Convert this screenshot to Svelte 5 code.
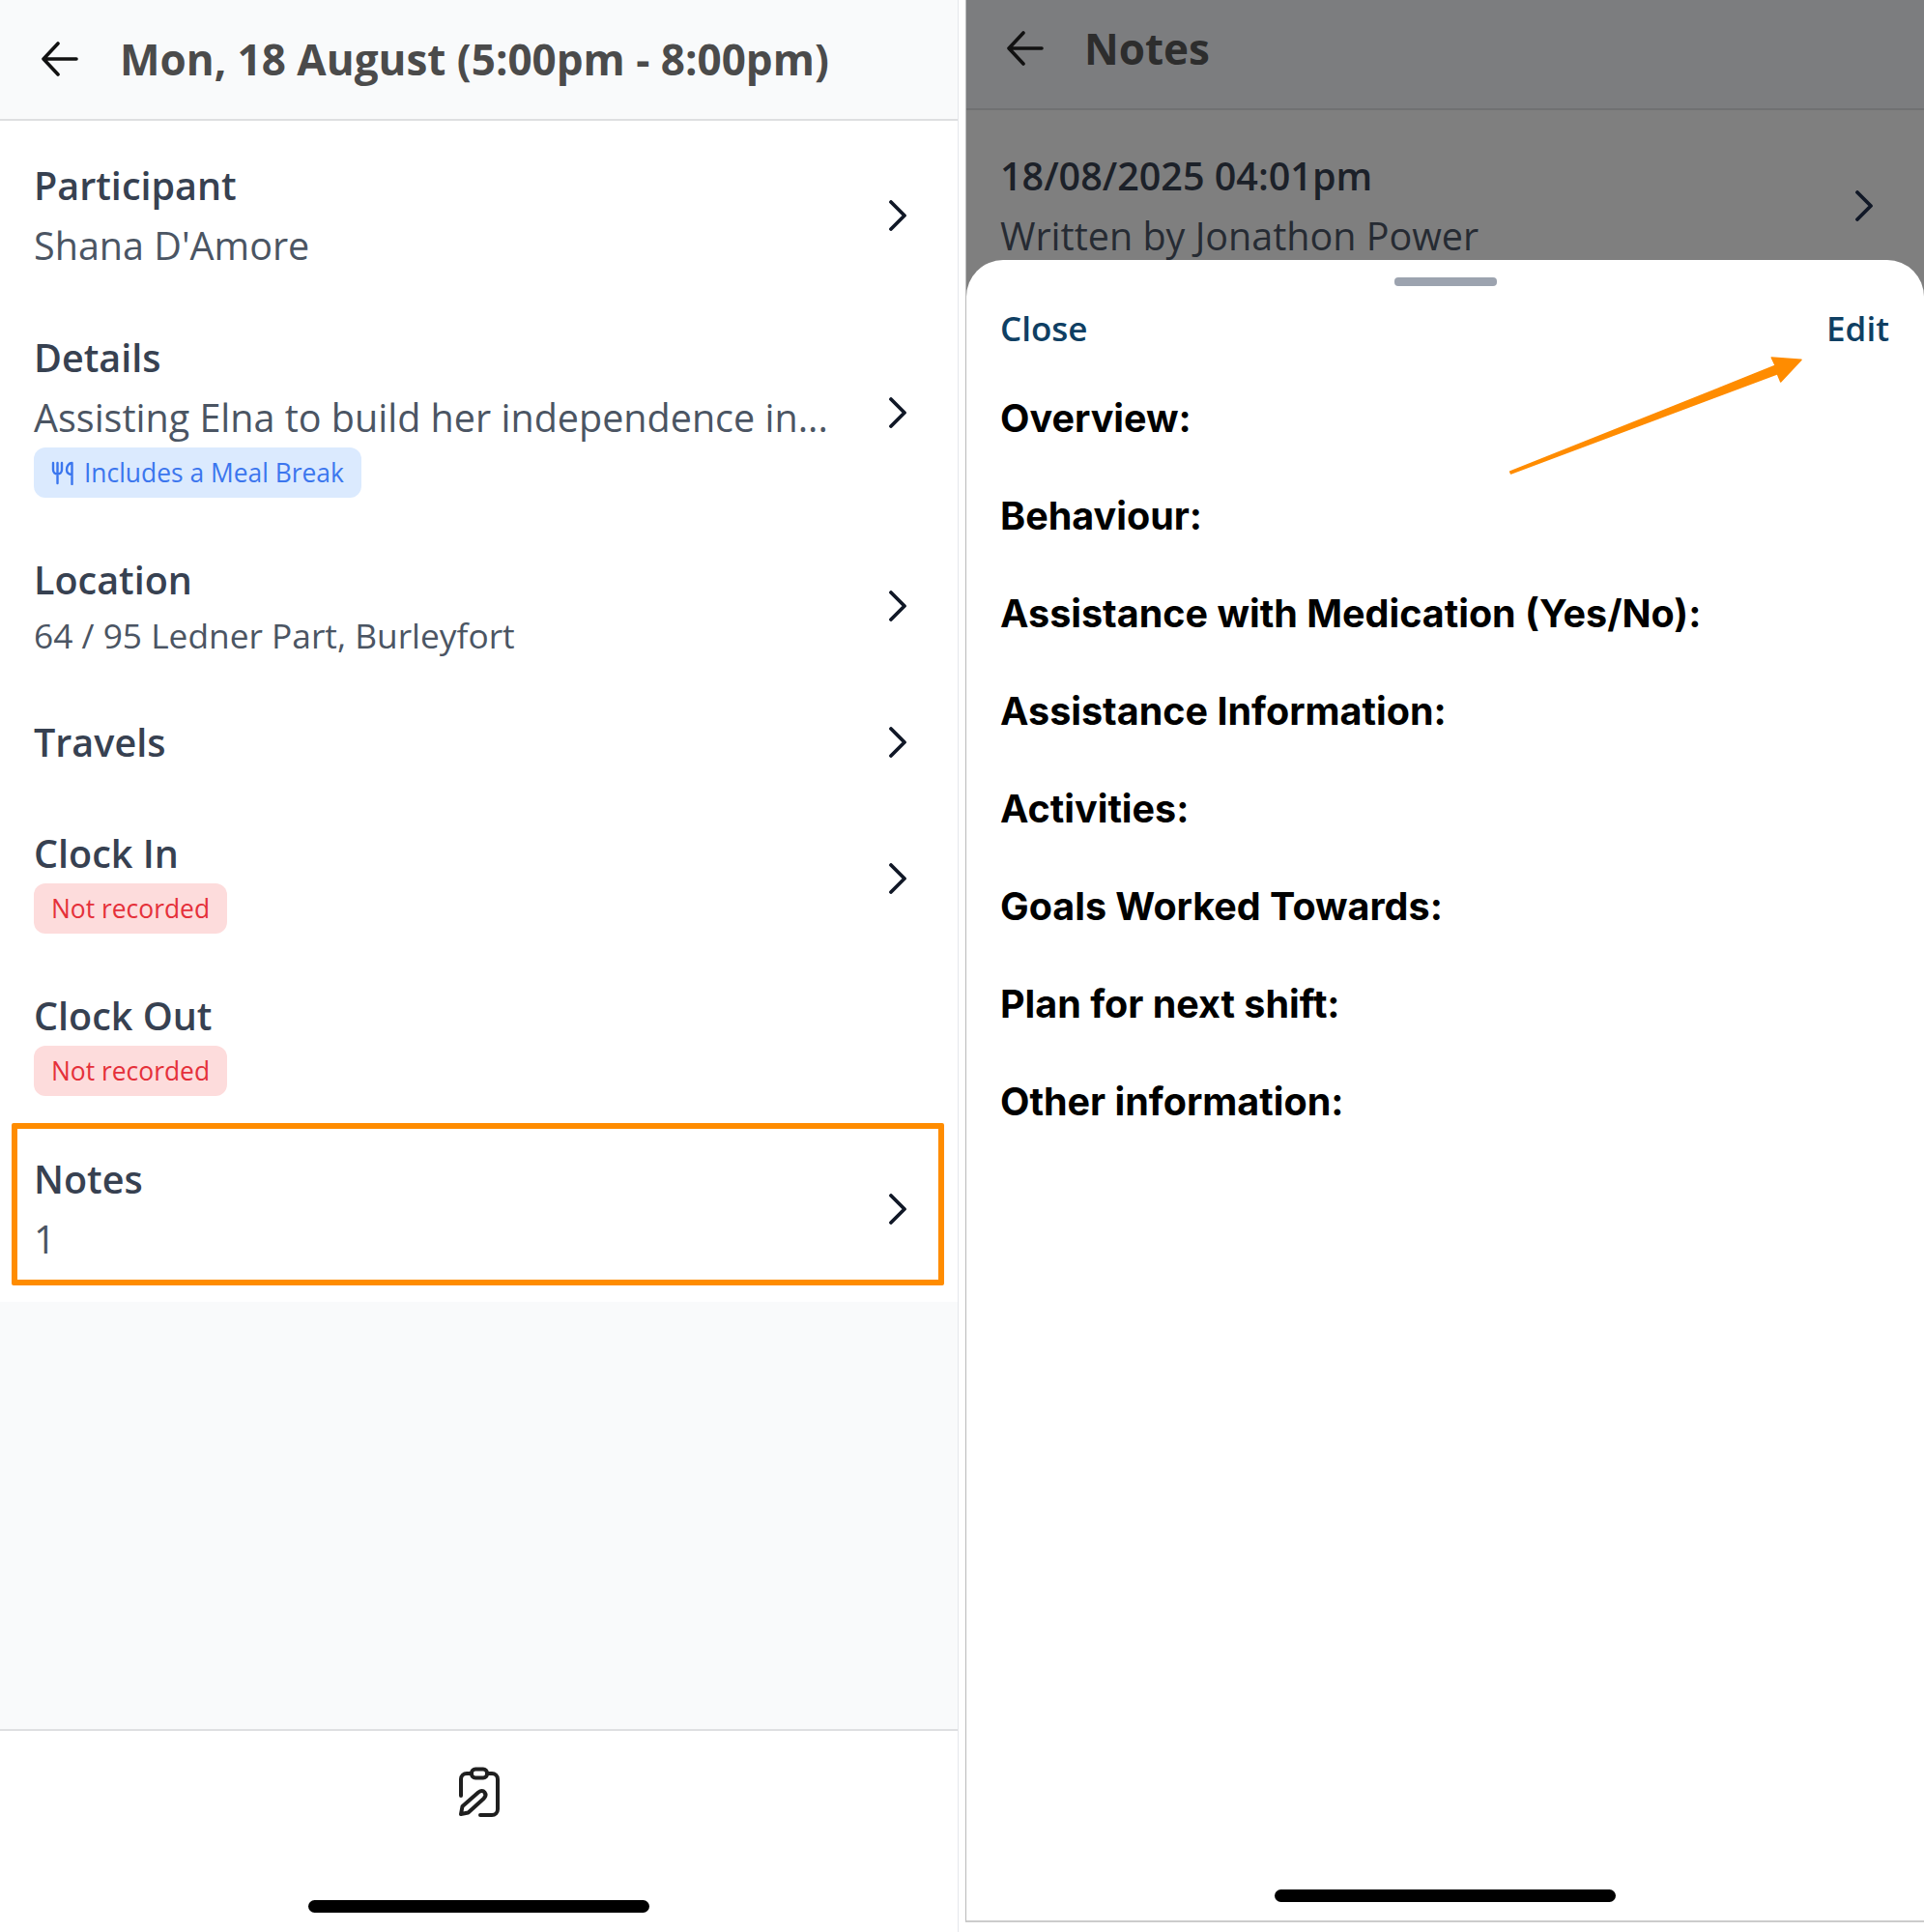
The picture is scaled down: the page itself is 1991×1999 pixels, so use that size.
<script lang="ts">
	const rows = [
		{ label: 'Participant', value: "Shana D'Amore", chevron: true },
		{ label: 'Details', value: 'Assisting Elna to build her independence in...', meal: true, chevron: true },
		{ label: 'Location', value: '64 / 95 Ledner Part, Burleyfort', small: true, chevron: true },
		{ label: 'Travels', solo: true, chevron: true },
		{ label: 'Clock In', missing: true, chevron: true },
		{ label: 'Clock Out', missing: true },
		{ label: 'Notes', value: '1', chevron: true, marked: true }
	];

	const sections = [
		'Overview:',
		'Behaviour:',
		'Assistance with Medication (Yes/No):',
		'Assistance Information:',
		'Activities:',
		'Goals Worked Towards:',
		'Plan for next shift:',
		'Other information:'
	];
</script>

{#snippet back()}
	<svg class="back" width="38" height="36" viewBox="0 0 38 36" fill="none" stroke="currentColor" stroke-width="3.6" stroke-linecap="round" stroke-linejoin="round">
		<path d="M36 18H3M17 2 2 18l15 16" />
	</svg>
{/snippet}

{#snippet chevron()}
	<svg class="chevron" width="20" height="32" viewBox="0 0 20 32" fill="none" stroke="#111827" stroke-width="3.8" stroke-linecap="round" stroke-linejoin="round">
		<path d="M3 2l14 14L3 30" />
	</svg>
{/snippet}

<div class="page">
	<section class="left">
		<header class="top">
			{@render back()}
			<h1>Mon, 18 August (5:00pm - 8:00pm)</h1>
		</header>

		<div class="list">
			{#each rows as row}
				<div class="row" class:solo={row.solo} class:marked={row.marked}>
					<div class="info">
						<div class="label">{row.label}</div>
						{#if row.value}
							<div class="value" class:small={row.small}>{row.value}</div>
						{/if}
						{#if row.meal}
							<span class="badge blue">
								<svg width="24" height="25" viewBox="0 0 24 25" fill="none" stroke="currentColor" stroke-width="2.4" stroke-linecap="round" stroke-linejoin="round">
									<path d="M2 2v7c0 3 2 4.500 4.500 4.500S11 12 11 9V2M6.500 2v21M21.500 2v22M21.500 2c-3 0-5.500 3-5.500 7 0 3 2 5 5.500 5" />
								</svg>
								Includes a Meal Break
							</span>
						{/if}
						{#if row.missing}
							<span class="badge red">Not recorded</span>
						{/if}
					</div>
					{#if row.chevron}
						{@render chevron()}
					{/if}
				</div>
			{/each}
		</div>

		<div class="spacer"></div>

		<footer class="bottom">
			<svg width="44" height="52" viewBox="0 0 44 52" fill="none" stroke="#1f1f1f" stroke-width="4" stroke-linecap="round" stroke-linejoin="round">
				<path d="M14 7H9a6 6 0 0 0-6 6v17M30 7h5a6 6 0 0 1 6 6v31a6 6 0 0 1-6 6H23" />
				<rect x="14" y="2.500" width="16" height="9" rx="4" />
				<path d="M3 49l1.500-8L21 26.500c2.500-2 5-2 6.500 0s1 4.500-1 6.500L10.500 47.500z" />
			</svg>
			<div class="home-bar"></div>
		</footer>
	</section>

	<section class="right">
		<header class="top dim">
			{@render back()}
			<h1>Notes</h1>
		</header>
		<div class="note">
			<div>
				<div class="note-date">18/08/2025 04:01pm</div>
				<div class="note-author">Written by Jonathon Power</div>
			</div>
			{@render chevron()}
		</div>

		<div class="sheet">
			<div class="grabber"></div>
			<div class="actions">
				<span>Close</span>
				<span>Edit</span>
			</div>
			<div class="sections">
				{#each sections as section}
					<div class="section">{section}</div>
				{/each}
			</div>
			<div class="home-bar sheet-bar"></div>

			<svg class="pointer" width="340" height="150" viewBox="0 0 340 150">
				<path d="M12.700 138 287.300 28.300 283.300 20 314 22.300 292.700 45 289.300 36.700 13.500 140z" fill="#ff8c00" stroke="#ff8c00" stroke-width="1.500" stroke-linejoin="round" />
			</svg>
		</div>
	</section>
</div>

<style>
	:global(body) {
		margin: 0;
		background: #fff;
	}

	.page {
		display: grid;
		grid-template-columns: 992px 992px;
		column-gap: 7px;
		width: 1991px;
		height: 1999px;
		font-family: 'Open Sans', sans-serif;
		color: #374151;
	}

	.left {
		display: flex;
		flex-direction: column;
		border-right: 1px solid #e5e7eb;
		box-sizing: border-box;
	}

	.top {
		display: flex;
		align-items: center;
		box-sizing: border-box;
		height: 125px;
		padding: 0 0 2px 43px;
		gap: 43px;
		background: #f9fafb;
		border-bottom: 2px solid #dedfe1;
		color: #111;
	}

	.top h1 {
		margin: 0;
		font-size: 44px;
		font-weight: 700;
		color: #4b4b4b;
	}

	.list {
		padding: 9px 0 8px;
	}

	.row {
		position: relative;
		display: flex;
		align-items: center;
		justify-content: space-between;
		padding: 27px 52px 27px 35px;
	}

	.row.solo {
		padding-block: 26px;
	}

	.row.marked {
		padding-block: 28px 26px;
	}

	.row.marked::after {
		content: '';
		position: absolute;
		left: 12px;
		top: 1px;
		width: 965px;
		height: 168px;
		box-sizing: border-box;
		border: 6px solid #ff8c00;
		border-radius: 2px;
	}

	.label {
		font-size: 39.5px;
		line-height: 62px;
		font-weight: 600;
		color: #374151;
	}

	.value {
		font-size: 39.5px;
		line-height: 62px;
		color: #4b5563;
	}

	.value.small {
		font-size: 35.3px;
		line-height: 53px;
	}

	.badge {
		display: inline-flex;
		align-items: center;
		gap: 10px;
		box-sizing: border-box;
		height: 52px;
		padding: 0 18px;
		border-radius: 12px;
		font-size: 26.400px;
	}

	.badge.blue {
		background: #dbeafe;
		color: #3b76ee;
	}

	.badge.red {
		background: #fddcdc;
		color: #e5303a;
	}

	.spacer {
		flex: 1;
		background: #f9fafb;
	}

	.bottom {
		display: flex;
		flex-direction: column;
		align-items: center;
		box-sizing: border-box;
		height: 210px;
		padding-top: 37px;
		border-top: 2px solid #dedfe1;
	}

	.home-bar {
		width: 353px;
		height: 13px;
		border-radius: 7px;
		background: #000;
		margin-top: 86px;
	}

	.right {
		position: relative;
		height: 1989px;
		box-sizing: border-box;
		border-left: 1px solid #bbb;
		border-bottom: 2px solid #ccc;
		background: #7f7f7f;
		overflow: hidden;
	}

	.top.dim {
		height: 114px;
		padding: 0 0 12px 42px;
		gap: 42px;
		background: #7c7d7f;
		border-bottom: 2px solid #707172;
	}

	.top.dim h1 {
		color: #2d2d2d;
	}

	.note {
		display: flex;
		align-items: center;
		justify-content: space-between;
		padding: 37px 52px 0 35px;
	}

	.note-date {
		font-size: 39.5px;
		line-height: 62px;
		font-weight: 600;
		color: #1c2129;
	}

	.note-author {
		font-size: 39.5px;
		line-height: 62px;
		color: #262b33;
	}

	/* bottom sheet sits over the dimmed notes list */
	.sheet {
		position: absolute;
		inset: 269px 0 0 0;
		display: flex;
		flex-direction: column;
		background: #fff;
		border-radius: 38px 38px 0 0;
	}

	.grabber {
		align-self: center;
		width: 106px;
		height: 9px;
		margin-top: 18px;
		border-radius: 4px;
		background: #9ca3af;
	}

	.actions {
		display: flex;
		justify-content: space-between;
		padding: 18px 36px 0 35px;
		font-size: 35px;
		line-height: 52px;
		font-weight: 600;
		color: #0f3f63;
	}

	.sections {
		display: flex;
		flex-direction: column;
		padding: 42px 35px 0;
		gap: 50px;
	}

	.section {
		font-family: Inter, sans-serif;
		font-size: 39.5px;
		line-height: 51px;
		font-weight: 700;
		color: #000;
	}

	.sheet-bar {
		position: absolute;
		left: 319px;
		bottom: 19px;
		margin: 0;
	}

	.pointer {
		position: absolute;
		left: 550px;
		top: 81px;
	}
</style>
